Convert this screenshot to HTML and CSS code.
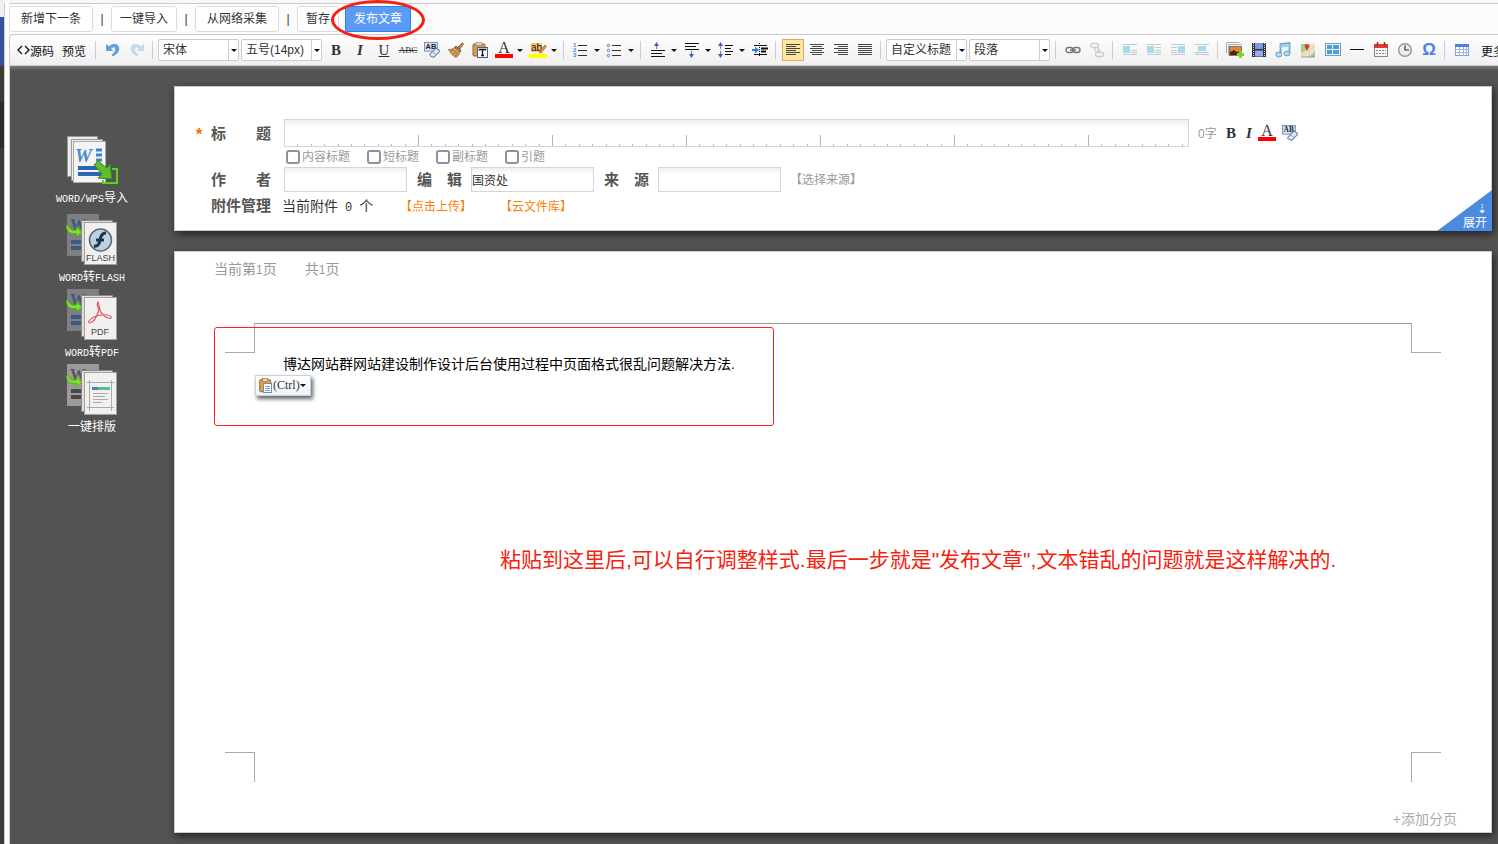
FILE: index.html
```html
<!DOCTYPE html>
<html lang="zh-CN">
<head>
    <meta charset="UTF-8">
    <title>文章编辑</title>
    <link rel="stylesheet" href="styles.css">
</head>
<body>
    <svg class="defs" aria-hidden="true">
        <symbol id="i-eraser" viewBox="0 1 15 15">
            <rect x=".5" y="1.500" width="12" height="8" fill="#dce8f8" stroke="#7b93bd"/>
            <text x="1.500" y="8" font-size="7" font-weight="bold" fill="#222">AB</text>
            <path d="M5.500 12.500l5-5q1-1 2 0l1.500 1q1 1 0 2l-4 4q-1 1-2 .5l-2-1q-1-.7-.5-1.500z" fill="#e4eaf5" stroke="#6d7fa5"/>
            <path d="M8 10l3.500 3" stroke="#9dabc8"/>
        </symbol>
        <symbol id="i-swoosh" viewBox="0 0 14 12">
            <path d="M0 2q2-1 3 2q2 3 6 2V3l5 5-5 4V9Q3 10 1 6z" fill="#7be32c" stroke="#4ba516" stroke-width=".7"/>
        </symbol>
        <symbol id="i-pages" viewBox="0 0 52 52">
            <rect x="15.500" y="6.500" width="31" height="41" fill="#ddd" stroke="#888"/>
            <rect x="18.500" y="8.500" width="32" height="42" fill="#f2f0ee" stroke="#a5a09a"/>
        </symbol>
    </svg>

    <div class="edge"></div>
    <div class="app">
        <div class="actions">
            <button type="button" class="btn">新增下一条</button>
            <span class="bar">|</span>
            <button type="button" class="btn btn-small">一键导入</button>
            <span class="bar">|</span>
            <button type="button" class="btn">从网络采集</button>
            <span class="bar">|</span>
            <button type="button" class="btn btn-small">暂存</button>
            <span class="publish"><button type="button" class="btn btn-small btn-primary">发布文章</button></span>
        </div>

        <div class="toolbar">
            <div class="tool-text">
                <button type="button" class="source"><svg width="13" height="12" viewBox="0 0 13 12"><path d="M5 2L1 6l4 4M8 2l4 4-4 4" fill="none" stroke="#111" stroke-width="1.300"/></svg>源码</button>
                <button type="button">预览</button>
            </div>
            <i class="sep"></i>
            <button type="button" class="tool" aria-label="撤销"><svg width="16" height="16" viewBox="0 0 16 16"><path d="M1.500 2.500v6h6L5.500 6.500Q9 3.500 10.500 6q1 3-3 6.500v1.500q6-2.500 6.500-7Q13.500 1.500 8 2.500Q5 3 4 5z" fill="#5ba1e6" stroke="#3f86d0" stroke-width=".6"/></svg></button>
            <button type="button" class="tool faded" aria-label="重做"><svg width="16" height="16" viewBox="0 0 16 16"><path d="M14.500 2.500v6h-6l2-2Q7 3.500 5.500 6q-1 3 3 6.500v1.500Q2.500 11.500 2 7Q2.500 1.500 8 2.500q3 .5 4 2.500z" fill="#8fc2ee" stroke="#5a9edb" stroke-width=".6"/></svg></button>
            <i class="sep"></i>
            <span class="combo"><select aria-label="字体"><option>宋体</option></select></span>
            <span class="combo"><select aria-label="字号"><option>五号(14px)</option></select></span>
            <button type="button" class="tool letter"><b>B</b></button>
            <button type="button" class="tool letter"><b><i>I</i></b></button>
            <button type="button" class="tool letter"><u>U</u></button>
            <button type="button" class="tool strike"><s>ABC</s></button>
            <button type="button" class="tool" aria-label="清除格式"><svg width="16" height="16"><use href="#i-eraser"/></svg></button>
            <button type="button" class="tool" aria-label="格式刷"><svg width="16" height="16" viewBox="0 0 16 16"><path d="M9.500 5.500l4-4q1.500-1 2 .5L12 7z" fill="#c58a4a" stroke="#81501d" stroke-width=".8"/><path d="M8 4l5 4.500-1 1.500-5.500-4.500z" fill="#8f8f98" stroke="#655"/><path d="M6.500 5.500Q4 8 .5 7.500Q3 13 8 15.500Q11 14 12 10z" fill="#dda052" stroke="#97632c" stroke-width=".8"/><path d="M3 9l3-1M5 12l3-3M7.500 14l2-4" stroke="#8f5b24" stroke-width=".8"/></svg></button>
            <button type="button" class="tool" aria-label="纯文本粘贴"><svg width="16" height="16" viewBox="0 0 16 16"><rect x="1" y="2" width="12" height="12" rx="1" fill="#d49b54" stroke="#98622a"/><rect x="4" y=".7" width="6" height="3" fill="#e8d9b0" stroke="#888" stroke-width=".7"/><rect x="5.500" y="5.500" width="10" height="10" fill="#f6f9fd" stroke="#47618c"/><path d="M7.500 8.500V7.500h6v1M10.500 7.500v6M9 13.500h3" stroke="#111" stroke-width="1.300" fill="none"/></svg></button>
            <button type="button" class="tool split"><span class="glyph-a">A</span></button>
            <button type="button" class="tool split" aria-label="背景色"><svg width="18" height="16" viewBox="0 0 18 16"><rect x="2" y="1" width="11" height="9" fill="#f6c469"/><text x="2" y="9" font-size="10" fill="#111">ab</text><path d="M11 9l5-6 1.500 1.500-5 6-2 .5z" fill="#e59745" stroke="#a05a2a" stroke-width=".7"/><rect y="12" width="18" height="4" fill="#ff0"/></svg></button>
            <i class="sep"></i>
            <button type="button" class="tool split" aria-label="有序列表"><svg width="18" height="16" viewBox="0 0 18 16"><g font-size="6" font-weight="bold" fill="#4a83e0"><text x="1" y="5">1</text><text x="1" y="10">2</text><text x="1" y="15">3</text></g><path d="M6 3.500h9M6 8.500h9M6 13.500h9" stroke="#333"/></svg></button>
            <button type="button" class="tool split" aria-label="无序列表"><svg width="18" height="16" viewBox="0 0 18 16"><g fill="none" stroke="#4a83e0"><circle cx="2.500" cy="3.500" r="1.200"/><circle cx="2.500" cy="8.500" r="1.200"/><circle cx="2.500" cy="13.500" r="1.200"/></g><path d="M6 3.500h9M6 8.500h9M6 13.500h9" stroke="#333"/></svg></button>
            <i class="sep"></i>
            <button type="button" class="tool split" aria-label="段前距"><svg width="18" height="16" viewBox="0 0 18 16"><path d="M7.500 7V2" stroke="#6280b8"/><path d="M5 4l2.500-4L10 4z" fill="#3c63b0"/><path d="M2 8.500h14M2 11.500h11M2 14.500h14" stroke="#111"/></svg></button>
            <button type="button" class="tool split" aria-label="段后距"><svg width="18" height="16" viewBox="0 0 18 16"><path d="M2 1.500h14M2 4.500h11M2 7.500h14" stroke="#111"/><path d="M8.500 9v4" stroke="#6280b8"/><path d="M6 12l2.500 4L11 12z" fill="#3c63b0"/></svg></button>
            <button type="button" class="tool split" aria-label="行间距"><svg width="18" height="16" viewBox="0 0 18 16"><path d="M3.500 3v10" stroke="#6280b8" stroke-dasharray="4 2"/><path d="M1 4l2.500-4L6 4zM1 12l2.500 4L6 12z" fill="#3c63b0"/><path d="M8 3.500h8M8 6.500h6M8 9.500h8M8 12.500h6" stroke="#111"/></svg></button>
            <button type="button" class="tool" aria-label="首行缩进"><svg width="16" height="16" viewBox="0 0 16 16"><path d="M0 8h4" stroke="#2f7fd6" stroke-width="2"/><path d="M3 4.500L7 8l-4 3.500z" fill="#2f7fd6"/><path d="M7.500 1v14" stroke="#111" stroke-dasharray="1 1"/><path d="M2 3.500h13M2 12.500h13" stroke="#111"/><path d="M9 6.500h7M9 9.500h5" stroke="#111" stroke-width="2"/></svg></button>
            <i class="sep"></i>
            <button type="button" class="tool active" aria-label="左对齐"><svg width="16" height="16" viewBox="0 0 16 16"><path d="M1 2.500h14M1 4.500h10M1 6.500h14M1 8.500h10M1 10.500h14M1 12.500h10" stroke="#444"/></svg></button>
            <button type="button" class="tool" aria-label="居中"><svg width="16" height="16" viewBox="0 0 16 16"><path d="M1 2.500h14M3 4.500h10M1 6.500h14M3 8.500h10M1 10.500h14M3 12.500h10" stroke="#444"/></svg></button>
            <button type="button" class="tool" aria-label="右对齐"><svg width="16" height="16" viewBox="0 0 16 16"><path d="M1 2.500h14M5 4.500h10M1 6.500h14M5 8.500h10M1 10.500h14M5 12.500h10" stroke="#444"/></svg></button>
            <button type="button" class="tool" aria-label="两端对齐"><svg width="16" height="16" viewBox="0 0 16 16"><path d="M1 2.500h14M1 4.500h14M1 6.500h14M1 8.500h14M1 10.500h14M1 12.500h14" stroke="#444"/></svg></button>
            <i class="sep"></i>
            <span class="combo"><select aria-label="标题样式"><option>自定义标题</option></select></span>
            <span class="combo"><select aria-label="段落格式"><option>段落</option></select></span>
            <i class="sep"></i>
            <button type="button" class="tool" aria-label="超链接"><svg width="16" height="16" viewBox="0 0 16 16"><g fill="none" stroke="#77776f" stroke-width="1.400"><rect x="1" y="5.500" width="7" height="5" rx="2.500"/><rect x="8" y="5.500" width="7" height="5" rx="2.500"/><path d="M5 8h6"/></g></svg></button>
            <button type="button" class="tool" aria-label="取消链接"><svg width="16" height="16" viewBox="0 0 16 16"><g fill="none" stroke="#ccc" stroke-width="1.300"><rect x="1.500" y="1.500" width="8" height="4" rx="2"/><rect x="6.500" y="10.500" width="8" height="4" rx="2"/><path d="M7 5q-3 3 0 4t4-2M8 5l3 5"/></g></svg></button>
            <i class="sep"></i>
            <button type="button" class="tool" aria-label="左浮动"><svg width="16" height="16" viewBox="0 0 16 16"><path d="M1 2.500h14M9 8.500h6M9 10.500h6M1 12.500h14" stroke="#c4c8cc"/><rect x="1" y="4" width="7" height="7" fill="#a9d8f3"/></svg></button>
            <button type="button" class="tool" aria-label="左环绕"><svg width="16" height="16" viewBox="0 0 16 16"><path d="M1 2.500h14M9 5.500h6M9 8.500h6M9 10.500h6M1 12.500h14" stroke="#c4c8cc"/><rect x="1" y="4" width="7" height="7" fill="#a9d8f3"/></svg></button>
            <button type="button" class="tool" aria-label="右环绕"><svg width="16" height="16" viewBox="0 0 16 16"><path d="M1 2.500h14M1 5.500h6M1 8.500h6M1 10.500h6M1 12.500h14" stroke="#c4c8cc"/><rect x="8" y="4" width="7" height="7" fill="#a9d8f3"/></svg></button>
            <button type="button" class="tool" aria-label="图片居中"><svg width="16" height="16" viewBox="0 0 16 16"><path d="M1 2.500h14M1 10.500h14M1 12.500h14" stroke="#c4c8cc"/><rect x="4" y="4" width="8" height="5" fill="#a9d8f3"/></svg></button>
            <i class="sep"></i>
            <button type="button" class="tool" aria-label="图片"><svg width="18" height="16" viewBox="0 0 18 16"><path d="M.5 11V.5h13M2.500 13V2.500h13" fill="none" stroke="#aaa"/><rect x="3.500" y="4.500" width="12" height="9" fill="#e58a2c" stroke="#777"/><path d="M4 13v-3l4-2 3 2 4-1v4z" fill="#50260c"/><path d="M14.500 9v7M11 12.500h7" stroke="#8ccc2a" stroke-width="3"/></svg></button>
            <button type="button" class="tool" aria-label="视频"><svg width="16" height="16" viewBox="0 0 16 16"><rect x="1" y="1" width="14" height="14" fill="#333"/><rect x="4" y="1" width="8" height="6" fill="#7b98ea"/><rect x="4" y="8.500" width="8" height="6" fill="#93abf0"/><path d="M2.500 1v14M13.500 1v14" stroke="#ddd" stroke-dasharray="1 1"/></svg></button>
            <button type="button" class="tool" aria-label="音乐"><svg width="16" height="16" viewBox="0 0 16 16"><path d="M5.500 11.500V2l9-1v10" fill="none" stroke="#69a9da" stroke-width="1.800"/><path d="M5.500 4.500l9-1" stroke="#9bcbec" stroke-width="2"/><ellipse cx="3.800" cy="12.500" rx="3" ry="2.500" fill="#b4dbf3" stroke="#5c9fd2"/><ellipse cx="12" cy="11.500" rx="3" ry="2.300" fill="#b4dbf3" stroke="#5c9fd2"/></svg></button>
            <button type="button" class="tool wide" aria-label="地图"><svg width="16" height="16" viewBox="0 0 16 16"><rect x="1" y="2" width="14" height="13" fill="#e8e3d4"/><path d="M1 2h5v6l-5 3zM9 15l6-6v6z" fill="#a9cd84"/><path d="M1 14L15 4M10 2l-1 13" stroke="#e6cf8c"/><path d="M1 15h14" stroke="#999"/><path d="M7 9L4.500 4a2.600 2.600 0 0 1 5 0z" fill="#e2362a"/></svg></button>
            <button type="button" class="tool wide" aria-label="代码块"><svg width="16" height="16" viewBox="0 0 16 16"><rect x=".5" y="1.500" width="15" height="12" fill="#eef6fc" stroke="#769bb5"/><path d="M2 3h5v4H2zM8 3h6v4H8zM2 8h5v4H2zM8 8h6v4H8z" fill="#4a9fd9"/></svg></button>
            <button type="button" class="tool" aria-label="分隔线"><svg width="16" height="16" viewBox="0 0 16 16"><path d="M1 7.500h14" stroke="#111"/></svg></button>
            <button type="button" class="tool" aria-label="日期"><svg width="16" height="16" viewBox="0 0 16 16"><rect x="1.500" y="2.500" width="13" height="12" fill="#f5f5f5" stroke="#888"/><path d="M1 2h14v4H1z" fill="#dd3b36"/><path d="M4.500 0v4M11.500 0v4" stroke="#a32420" stroke-width="1.500"/><path d="M3 8.500h10M3 11.500h10" stroke="#888" stroke-dasharray="2 1"/></svg></button>
            <button type="button" class="tool" aria-label="时间"><svg width="16" height="16" viewBox="0 0 16 16"><circle cx="8" cy="8" r="6.300" fill="#eee" stroke="#999" stroke-width="1.500"/><path d="M8 3.500V8h4" fill="none" stroke="#333" stroke-width="1.200"/></svg></button>
            <button type="button" class="tool omega">Ω</button>
            <i class="sep"></i>
            <button type="button" class="tool" aria-label="表格"><svg width="16" height="16" viewBox="0 0 16 16"><rect x="1.500" y="2.500" width="13" height="11" fill="#fff" stroke="#7e9fdb"/><path d="M1 2h14v3H1z" fill="#4e7fe0"/><path d="M1 7.500h14M1 10.500h14M5.500 5v9M9.500 5v9M12.500 5v9" stroke="#9eb6e2"/></svg></button>
            <button type="button" class="more">更多</button>
        </div>

        <div class="workspace">
            <nav class="sidebar">
                <a href="#" class="import">
                    <svg width="52" height="52" viewBox="0 0 52 52">
                        <rect x="1.500" y="1.500" width="30" height="40" fill="#ececec" stroke="#999"/>
                        <rect x="5.500" y="4.500" width="31" height="41" fill="#eee" stroke="#999"/>
                        <rect x="7.500" y="6.500" width="32" height="41" fill="#f3f3f3" stroke="#aaa"/>
                        <text x="9" y="27" font-family="Liberation Serif" font-size="19" font-weight="bold" font-style="italic" fill="#438dce">W</text>
                        <path d="M30 15h6M30 20h6M30 25h6" stroke="#3c84ca" stroke-width="3"/>
                        <path d="M12 33h24M12 39h24" stroke="#2865b3" stroke-width="4"/>
                        <path d="M28 30l4-4 9 7 3-4 2 15-14-1 4-4z" fill="#62bd2b" stroke="#37891a"/>
                        <path d="M37 45v3h14V34h-5" fill="none" stroke="#5bd021" stroke-width="2"/>
                    </svg>
                    <span class="name"><span class="latin">WORD/WPS</span>导入</span>
                </a>
                <a href="#">
                    <svg width="52" height="52" viewBox="0 0 52 52">
                        <rect x="1" y="0" width="32" height="42" fill="#7d7f82"/>
                        <text x="4" y="16" font-family="Liberation Serif" font-size="16" font-weight="bold" fill="#3f5a80">W</text>
                        <path d="M5 28h12M5 34h12" stroke="#3f5a80" stroke-width="4"/>
                        <use href="#i-pages" width="52" height="52"/>
                        <use href="#i-swoosh" x="0" y="9" width="16" height="14"/>
                        <circle cx="34.500" cy="26" r="11" fill="#c2d0dc" stroke="#4f6a84" stroke-width="1.500"/>
                        <path d="M40 19q-5 0-6 7t-6 6M30 26h8" fill="none" stroke="#1c3550" stroke-width="3"/>
                        <text x="20" y="47" font-size="9" fill="#444">FLASH</text>
                    </svg>
                    <span class="name"><span class="latin">WORD</span>转<span class="latin">FLASH</span></span>
                </a>
                <a href="#">
                    <svg width="52" height="52" viewBox="0 0 52 52">
                        <rect x="1" y="0" width="32" height="42" fill="#7d7f82"/>
                        <text x="4" y="16" font-family="Liberation Serif" font-size="16" font-weight="bold" fill="#3f5a80">W</text>
                        <path d="M5 28h12M5 34h12" stroke="#3f5a80" stroke-width="4"/>
                        <use href="#i-pages" width="52" height="52"/>
                        <use href="#i-swoosh" x="0" y="9" width="16" height="14"/>
                        <path d="M32 13q-2 2 1 8q-4 12-9 13q-2 0-1-2q4-5 12-6q8-1 10 2q1 2-3 1q-6-2-8-8q-2-8-2-8z" fill="none" stroke="#e0566a" stroke-width="1.200"/>
                        <text x="25" y="46" font-size="9" fill="#444">PDF</text>
                    </svg>
                    <span class="name"><span class="latin">WORD</span>转<span class="latin">PDF</span></span>
                </a>
                <a href="#">
                    <svg width="52" height="52" viewBox="0 0 52 52">
                        <rect x="1" y="0" width="32" height="42" fill="#9a9a9a"/>
                        <text x="4" y="16" font-family="Liberation Serif" font-size="16" font-weight="bold" fill="#555">W</text>
                        <path d="M5 27h12M5 33h12" stroke="#484848" stroke-width="4"/>
                        <use href="#i-pages" width="52" height="52"/>
                        <use href="#i-swoosh" x="0" y="9" width="16" height="14"/>
                        <path d="M21 18.500h27M21 43.500h27M23.500 16v31M45.500 16v31" stroke="#aaa"/>
                        <rect x="26" y="23" width="18" height="3" fill="#5cb99b"/>
                        <rect x="26" y="23" width="6" height="3" fill="#4f83b5"/>
                        <path d="M27 29.500h15M27 32.500h12M27 35.500h15M27 38.500h9" stroke="#aaa"/>
                    </svg>
                    <span class="name">一键排版</span>
                </a>
            </nav>

            <main class="main">
                <form class="panel info">
                    <div class="row row-title">
                        <span class="required">*</span>
                        <label class="label" for="title"><span>标</span><span>题</span></label>
                        <input type="text" id="title" class="ruler">
                        <div class="title-tools">
                            <span class="count">0字</span>
                            <button type="button" class="mini"><b>B</b></button>
                            <button type="button" class="mini"><b><i>I</i></b></button>
                            <button type="button" class="mini"><span class="glyph-a">A</span></button>
                            <button type="button" class="mini" aria-label="清除格式"><svg width="16" height="16"><use href="#i-eraser"/></svg></button>
                        </div>
                    </div>
                    <div class="row row-checks">
                        <label><input type="checkbox">内容标题</label>
                        <label><input type="checkbox">短标题</label>
                        <label><input type="checkbox">副标题</label>
                        <label><input type="checkbox">引题</label>
                    </div>
                    <div class="row row-author">
                        <label class="label" for="author"><span>作</span><span>者</span></label>
                        <input type="text" id="author">
                        <label class="label label-short" for="editor"><span>编</span><span>辑</span></label>
                        <input type="text" id="editor" value="国资处">
                        <label class="label label-short" for="origin"><span>来</span><span>源</span></label>
                        <input type="text" id="origin">
                        <a href="#" class="pick">【选择来源】</a>
                    </div>
                    <div class="row row-files">
                        <span class="label">附件管理</span>
                        <span class="files">当前附件<span class="num">0</span>个</span>
                        <a href="#" class="upload">【点击上传】</a>
                        <a href="#" class="upload">【云文件库】</a>
                    </div>
                    <button type="button" class="expand"><span>⇣</span>展开</button>
                </form>

                <section class="panel paper">
                    <div class="pages"><span>当前第<small>1</small>页</span><span>共<small>1</small>页</span></div>
                    <div class="marks marks-top"><i></i><i></i></div>
                    <div class="content">
                        <p>博达网站群网站建设制作设计后台使用过程中页面格式很乱问题解决方法.</p>
                        <button type="button" class="paste"><svg width="14" height="15" viewBox="0 0 14 15"><rect x=".7" y="1.700" width="11" height="12" rx="1" fill="#dfa050" stroke="#a0662a"/><rect x="3.500" y=".5" width="5" height="3" fill="#f6e08a" stroke="#98702c" stroke-width=".7"/><rect x="4.500" y="5.500" width="8" height="9" fill="#fff" stroke="#6f8fc0"/><path d="M6 8.500h5M6 10.500h5M6 12.500h5" stroke="#7f9cc8"/></svg>(Ctrl)</button>
                    </div>
                    <div class="marks marks-bottom"><i></i><i></i></div>
                    <div class="add"><a href="#">+添加分页</a></div>
                    <div class="highlight"></div>
                    <p class="note">粘贴到这里后,可以自行调整样式.最后一步就是"发布文章",文本错乱的问题就是这样解决的.</p>
                </section>
            </main>
        </div>
    </div>
</body>
</html>
```
FILE: styles.css
```css
*,
*::after {
    box-sizing: border-box;
}
body {
    margin: 0;
    display: flex;
    min-height: 100vh;
    overflow: hidden;
    font-family: "Liberation Sans", "Noto Sans CJK SC", sans-serif;
    font-size: 12px;
    color: #333;
}
button,
input,
select {
    font: inherit;
    color: inherit;
}
button {
    padding: 0;
    border: none;
    background: none;
    white-space: nowrap;
    cursor: pointer;
}
a {
    text-decoration: none;
}
p {
    margin: 0;
}
.defs {
    display: none;
}

/* 左侧边缘 */
.edge {
    width: 4px;
    background: linear-gradient(#f0f0f0 17px, #35539c 17px, #35539c 66px, #3d3b38 66px, #3d3b38 102px, #2c2b29 102px, #2c2b29 148px, #3d3b38 148px);
}
.app {
    flex: 1;
    min-width: 0;
    display: flex;
    flex-direction: column;
    padding-left: 5px;
    border-top: 3px solid #f7f7f9;
    box-shadow: inset 1px 0 #ccc;
}

/* 顶部按钮 */
.actions {
    display: flex;
    align-items: center;
    height: 31px;
    border-top: 1px solid #ccc;
    background: #fcfcfc;
}
.btn {
    height: 26px;
    padding: 0 11px;
    border: 1px solid #ddd;
    border-radius: 3px;
    background: #fff;
    line-height: 24px;
}
.btn-small {
    padding: 0 8px;
}
.bar {
    width: 18px;
    text-align: center;
    line-height: 20px;
}
.publish {
    position: relative;
    margin-left: 6px;
}
.publish::after {
    content: "";
    position: absolute;
    top: -6px;
    left: -14px;
    width: 94px;
    height: 40px;
    border: 3px solid #f5200f;
    border-radius: 50%;
    pointer-events: none;
}
.btn-primary {
    border-color: #1e88f0;
    border-radius: 2px;
    background: #5b9bf3;
    color: #fff;
}

/* 编辑器工具栏 */
.toolbar {
    display: flex;
    align-items: center;
    height: 32px;
    overflow: hidden;
    border: 1px solid #ccc;
    border-right: none;
    border-radius: 4px 0 0 0;
    background: linear-gradient(#fff, #efefef);
}
.toolbar > * {
    flex-shrink: 0;
}
.tool-text {
    display: flex;
    justify-content: space-between;
    width: 82px;
    padding: 0 6px 0 7px;
    color: #111;
}
.source {
    display: flex;
    align-items: center;
}
.sep {
    width: 1px;
    height: 18px;
    margin: 0 5px 0 3px;
    background: #ccd;
}
.tool {
    display: flex;
    align-items: center;
    justify-content: center;
    width: 24px;
    height: 22px;
}
.wide {
    width: 25px;
}
.faded {
    opacity: .5;
}
.letter,
.mini {
    font-family: "Liberation Serif", serif;
    font-size: 15px;
}
.strike {
    font-family: "Liberation Serif", serif;
    font-size: 9px;
}
.split {
    width: 34px;
    justify-content: flex-start;
    gap: 4px;
    padding-left: 3px;
}
.split::after,
.paste::after {
    content: "";
    border: solid transparent;
    border-width: 3px 3px 0;
    border-top-color: #111;
}
.active {
    width: 22px;
    margin: 0 1px;
    border: 1px solid #dcac6c;
    background: #ffe69f;
}
.omega {
    font-size: 17px;
    font-weight: bold;
    color: #4a83e8;
}
.more {
    margin-left: 7px;
    color: #111;
}
.glyph-a {
    width: 18px;
    border-bottom: 4px solid #f00;
    font-family: "Liberation Serif", serif;
    font-size: 16px;
    line-height: 12px;
    text-align: center;
}
.combo {
    position: relative;
    margin-right: 2px;
}
.combo select {
    display: block;
    width: 81px;
    height: 22px;
    padding: 0 12px 0 4px;
    border: 1px solid #ccc;
    border-radius: 2px;
    background: linear-gradient(#ccc, #ccc) right 9px top / 1px 100% no-repeat #fff;
    appearance: none;
}
.combo::after {
    content: "";
    position: absolute;
    top: 10px;
    right: 2px;
    border: solid transparent;
    border-width: 3px 3px 0;
    border-top-color: #111;
    pointer-events: none;
}

/* 工作区 */
.workspace {
    flex: 1;
    display: flex;
    padding: 20px 6px 11px 0;
    border-left: 1px solid #ccc;
    background: linear-gradient(#777, #535353 5px);
}
.sidebar {
    display: flex;
    flex-direction: column;
    width: 164px;
    padding-top: 49px;
}
.sidebar a {
    display: flex;
    flex-direction: column;
    align-items: center;
    color: #fff;
}
.sidebar .import {
    margin-bottom: 4px;
}
.name {
    height: 23px;
    line-height: 23px;
}
.latin {
    font-family: "Liberation Mono", monospace;
    font-size: 10px;
}
.main {
    flex: 1;
    display: flex;
    flex-direction: column;
    gap: 20px;
}
.panel {
    position: relative;
    border: 1px solid #ccc;
    background: #fff;
    box-shadow: 2px 3px 8px rgba(0, 0, 0, .6);
}

/* 文章信息 */
.info {
    padding: 32px 192px 11px 36px;
}
.row {
    display: flex;
    align-items: center;
}
.label {
    display: flex;
    justify-content: space-between;
    width: 60px;
    padding-bottom: 2px;
    font-size: 15px;
    font-weight: bold;
    color: #555;
}
.label-short {
    width: 45px;
    margin: 0 9px 0 10px;
}
.row input[type="text"] {
    width: 123px;
    height: 25px;
    padding: 0;
    border: 1px solid #d5d5d5;
    background: linear-gradient(#eee, #fff 6px);
}
.row-title {
    margin-left: -16px;
}
.required {
    width: 16px;
    padding: 4px 0 0 1px;
    font-size: 16px;
    font-weight: bold;
    line-height: 20px;
    color: #f60;
}
.row .ruler[type="text"] {
    flex: 1;
    height: 28px;
    margin-left: 13px;
    background:
        linear-gradient(to left, #c9a9c9 1px, transparent 1px) 0 100% / 134px 11px repeat-x,
        repeating-linear-gradient(to right, transparent 0, transparent calc(10% - 1px), #bbb calc(10% - 1px), #bbb 10%) 0 100% / 134px 2px repeat-x,
        linear-gradient(#eee, #fff 8px);
}
.title-tools {
    display: flex;
    align-items: center;
    margin-left: 9px;
}
.count {
    width: 24px;
    padding-bottom: 2px;
    color: #999;
}
.mini {
    display: flex;
    align-items: center;
    justify-content: center;
    min-width: 18px;
}
.mini:last-child {
    margin-left: 5px;
}
.row-checks {
    gap: 17px;
    height: 20px;
    padding-left: 75px;
    color: #999;
}
.row-checks label {
    display: flex;
    align-items: center;
    gap: 2px;
    line-height: 16px;
}
.row-checks input {
    width: 14px;
    height: 14px;
    margin: 0;
    border: 2px solid #8f8f9f;
    border-radius: 3px;
    appearance: none;
}
#author {
    margin-left: 13px;
}
.pick {
    margin-left: 9px;
    padding-bottom: 2px;
    color: #999;
}
.row-files {
    height: 27px;
}
.files {
    width: 118px;
    margin-left: 11px;
    padding-bottom: 2px;
    font-size: 14px;
}
.num {
    margin: 0 7px;
    font-family: "Liberation Mono", monospace;
    font-size: 12px;
}
.upload {
    width: 100px;
    color: #ff8000;
}
.expand {
    position: absolute;
    right: -1px;
    bottom: -1px;
    display: flex;
    flex-direction: column;
    align-items: flex-end;
    justify-content: flex-end;
    width: 55px;
    height: 41px;
    padding-right: 5px;
    background: #4a8be0;
    clip-path: polygon(100% 0, 100% 100%, 0 100%);
    color: #fff;
    line-height: 16px;
}
.expand span {
    line-height: 12px;
}

/* 正文 */
.paper {
    flex: 1;
    display: flex;
    flex-direction: column;
    padding: 7px 34px 3px 39px;
}
.pages {
    display: flex;
    gap: 28px;
    font-size: 14px;
    line-height: 20px;
    color: #999;
}
.pages small {
    font-size: 12px;
}
.marks {
    display: flex;
    justify-content: space-between;
    height: 30px;
    margin: 0 16px 0 11px;
}
.marks i {
    width: 30px;
    border: 0 solid #aaa;
}
.marks-top {
    margin-top: 43px;
    background: linear-gradient(#999, #999) center top / calc(100% - 60px) 1px no-repeat;
}
.marks-top i:first-child {
    border-width: 0 1px 1px 0;
}
.marks-top i:last-child {
    border-width: 0 0 1px 1px;
}
.marks-bottom i:first-child {
    border-width: 1px 1px 0 0;
}
.marks-bottom i:last-child {
    border-width: 1px 0 0 1px;
}
.content {
    flex: 1;
    padding-left: 41px;
}
.content p {
    font-size: 14px;
    line-height: 22px;
    text-indent: 2em;
    color: #000;
}
.paste {
    display: flex;
    align-items: center;
    width: 56px;
    height: 21px;
    padding-left: 3px;
    border: 1px solid #bcd5ea;
    background: linear-gradient(#fff, #eef2f8);
    box-shadow: 2px 3px 4px rgba(0, 0, 0, .6);
    font-family: "Liberation Serif", serif;
}
.add {
    margin-top: 27px;
    font-size: 14px;
    line-height: 20px;
    text-align: right;
}
.add a {
    color: #aaa;
}

/* 标注 */
.highlight {
    position: absolute;
    top: 75px;
    left: 39px;
    width: 560px;
    height: 99px;
    border: 1px solid #f22;
    border-radius: 3px;
    pointer-events: none;
}
.note {
    position: absolute;
    top: 293px;
    left: 325px;
    font-size: 21px;
    line-height: 30px;
    white-space: nowrap;
    color: #f5220f;
}
```
